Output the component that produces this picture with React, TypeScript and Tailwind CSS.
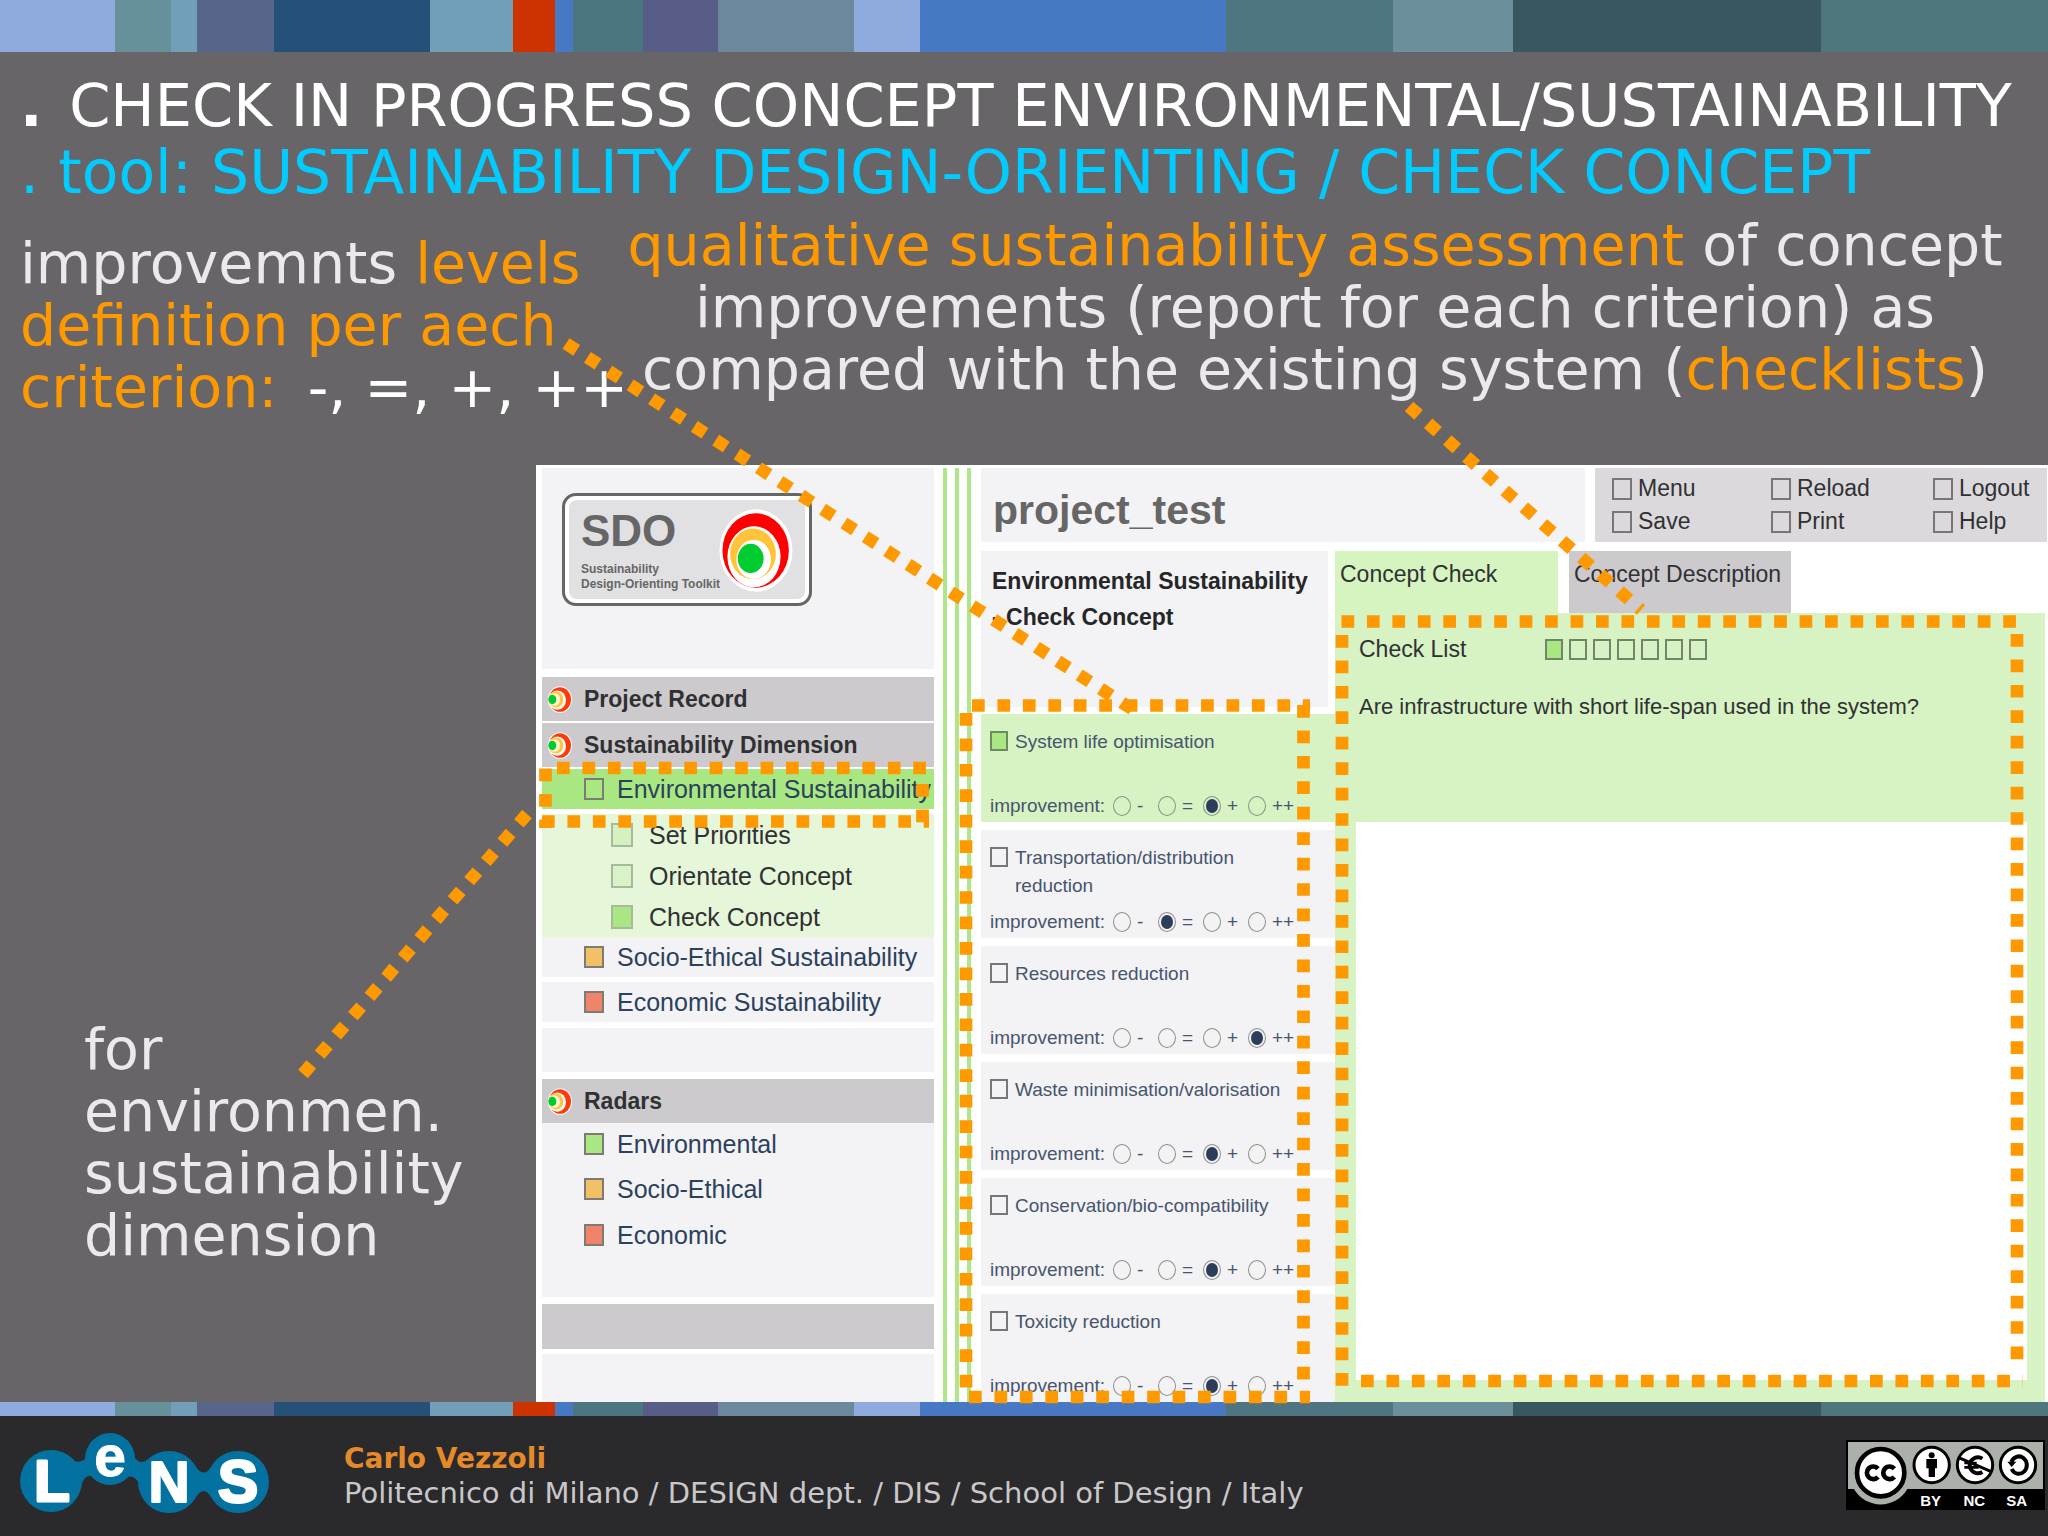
import React from "react";

const stripes: [number, string][] = [
  [115, "#8faadc"],
  [56, "#67919a"],
  [26, "#729fb8"],
  [77, "#58658a"],
  [156, "#255078"],
  [83, "#729fb8"],
  [42, "#cc3300"],
  [18, "#4678c3"],
  [70, "#4b767f"],
  [75, "#575d86"],
  [136, "#6b889c"],
  [66, "#8faadc"],
  [306, "#4678c3"],
  [167, "#4f7680"],
  [120, "#6b909b"],
  [308, "#395761"],
  [227, "#4f767d"],
];

function Stripes({ className }: { className: string }) {
  return (
    <div className={"flex w-full " + className} aria-hidden="true">
      {stripes.map(([w, c], i) => (
        <div key={i} style={{ flex: `${w} 1 0`, backgroundColor: c }} />
      ))}
    </div>
  );
}

function SdoMark() {
  return (
    <svg viewBox="0 0 222 250" className="h-[83px] w-[74px] shrink-0" aria-hidden="true">
      <ellipse cx="111" cy="125" rx="110" ry="124" fill="#fff" />
      <ellipse cx="110" cy="125" rx="100" ry="112" fill="#f00" />
      <ellipse cx="105" cy="144" rx="80" ry="92" fill="#fff" />
      <ellipse cx="102" cy="135" rx="69" ry="76" fill="#ffc43a" />
      <ellipse cx="104" cy="152" rx="52" ry="59" fill="#fff" />
      <ellipse cx="95" cy="149" rx="39" ry="44" fill="#00cc2f" />
    </svg>
  );
}

function Bullet() {
  return (
    <svg viewBox="0 0 72 80" className="h-[27px] w-6 shrink-0" aria-hidden="true">
      <ellipse cx="36" cy="40" rx="36" ry="40" fill="#fff" />
      <ellipse cx="36" cy="40" rx="33" ry="37" fill="#ff3a0a" />
      <ellipse cx="28" cy="42" rx="26" ry="29" fill="#fff" />
      <ellipse cx="24" cy="40" rx="22" ry="24" fill="#ffc43a" />
      <ellipse cx="19" cy="40" rx="18" ry="19" fill="#fff3cf" />
      <ellipse cx="13" cy="40" rx="12" ry="14" fill="#00cc2f" />
    </svg>
  );
}

function SectionBar({ children, className }: { children: React.ReactNode; className: string }) {
  return (
    <h2 className={"flex h-11 items-center bg-[#cccacc] pl-[6px] text-[23px] font-bold text-[#303133] " + className}>
      <Bullet />
      <span className="ml-3">{children}</span>
    </h2>
  );
}

function NavItem({ label, square, className }: { label: string; square: string; className: string }) {
  return (
    <a href="#" className={"flex items-center pl-[42px] text-[25px] leading-7 text-[#2b415c] " + className}>
      <span className={"mr-[13px] h-[22px] w-5 shrink-0 border-2 border-[#7c7c72] " + square} />
      <span className="whitespace-nowrap">{label}</span>
    </a>
  );
}

function SubItem({ label, square }: { label: string; square: string }) {
  return (
    <a href="#" className="flex h-[41px] items-center pl-[69px] text-[25px] leading-7 text-[#303133]">
      <span className={"mr-4 h-6 w-[22px] shrink-0 border-2 border-[#a9b99f] " + square} />
      {label}
    </a>
  );
}

function Sidebar() {
  return (
    <nav className="flex w-[392px] shrink-0 flex-col">
      <div className="h-[201px] bg-[#f3f2f4] pl-5 pt-[25px]">
        <div className="flex h-[113px] w-[250px] rounded-[14px] border-[3px] border-[#666] bg-white p-1">
          <div className="flex flex-1 justify-between rounded-[8px] bg-[#e1e0e2] pl-3 pr-3">
            <div className="w-[130px] whitespace-nowrap text-[#666]">
              <div className="pt-2 text-[44px] font-bold leading-[46px]">SDO</div>
              <div className="pt-2 text-[12px] font-bold leading-[15px]">
                Sustainability
                <br />
                Design-Orienting Toolkit
              </div>
            </div>
            <div className="pt-[9px]">
              <SdoMark />
            </div>
          </div>
        </div>
      </div>
      <SectionBar className="mt-2">Project Record</SectionBar>
      <SectionBar className="mt-[2px]">Sustainability Dimension</SectionBar>
      <NavItem label="Environmental Sustainability" square="bg-[#a9e783]" className="mt-[2px] h-10 bg-[#a9e783]" />
      <div className="mt-[5px] bg-[#e6f6d9]">
        <SubItem label="Set Priorities" square="bg-[#d5f1c0]" />
        <SubItem label="Orientate Concept" square="bg-[#d9f2c7]" />
        <SubItem label="Check Concept" square="bg-[#a9e783]" />
      </div>
      <NavItem label="Socio-Ethical Sustainability" square="bg-[#f2c066]" className="h-10 bg-[#f3f2f4]" />
      <NavItem label="Economic Sustainability" square="bg-[#ef846b]" className="mt-[5px] h-10 bg-[#f3f2f4]" />
      <div className="mt-[6px] h-[44px] bg-[#f3f2f4]" />
      <SectionBar className="mt-[7px]">Radars</SectionBar>
      <div className="h-[174px] bg-[#f3f2f4]">
        <NavItem label="Environmental" square="bg-[#a9e783]" className="h-[42px]" />
        <NavItem label="Socio-Ethical" square="bg-[#f2c066]" className="h-12" />
        <NavItem label="Economic" square="bg-[#ef846b]" className="h-[43px]" />
      </div>
      <div className="mt-[7px] h-[45px] bg-[#cccacc]" />
      <div className="mt-[5px] min-h-[40px] flex-1 bg-[#f3f2f4]" />
    </nav>
  );
}

const criteria: { name: string; level: number; active?: boolean }[] = [
  { name: "System life optimisation", level: 2, active: true },
  { name: "Transportation/distribution reduction", level: 1 },
  { name: "Resources reduction", level: 3 },
  { name: "Waste minimisation/valorisation", level: 2 },
  { name: "Conservation/bio-compatibility", level: 2 },
  { name: "Toxicity reduction", level: 2 },
];
const levels = ["-", "=", "+", "++"];

function Criterion({ name, level, active, index }: { name: string; level: number; active?: boolean; index: number }) {
  return (
    <div
      role="group"
      aria-label={name}
      className={
        "flex h-[108px] shrink-0 flex-col justify-between pb-[2px] pl-[9px] pt-[14px] text-[19px] leading-7 text-[#47556e] " +
        (active ? "bg-[#d7f2c3]" : "bg-[#f3f2f4]")
      }
    >
      <label className="flex items-start">
        <input
          type="checkbox"
          defaultChecked={active}
          className="mr-[7px] mt-[3px] h-5 w-[18px] shrink-0 appearance-none border-2 border-[#777] checked:border-[#6f8a60] checked:bg-[#a9e783]"
        />
        <span className="w-[290px]">{name}</span>
      </label>
      <div className="flex items-center">
        <span className="w-[123px]">improvement:</span>
        {levels.map((l, i) => (
          <label key={l} className="flex w-[45px] items-center">
            <input
              type="radio"
              name={"level-" + index}
              defaultChecked={i === level}
              className="mr-[6px] h-5 w-[18px] shrink-0 appearance-none rounded-[50%] border border-[#8d9189] bg-clip-content p-[2px] checked:bg-[#2c3d5c]"
            />
            {l}
          </label>
        ))}
      </div>
    </div>
  );
}

const menu = ["Menu", "Reload", "Logout", "Save", "Print", "Help"];

function Workspace() {
  return (
    <div className="ml-[10px] flex min-w-0 flex-1 flex-col">
      <div className="flex h-[74px] gap-[10px]">
        <h1 className="flex-1 bg-[#f3f2f4] pl-3 pt-4 text-[41px] font-bold leading-[52px] text-[#666]">project_test</h1>
        <div className="mr-[1px] grid w-[452px] grid-cols-[159px_162px_1fr] content-center bg-[#dbd9db] pl-[17px]">
          {menu.map((m) => (
            <button key={m} type="button" className="flex h-[33px] items-center text-left text-[23px] text-[#303133]">
              <span className="mr-[6px] h-[22px] w-5 border-2 border-[#77777a]" />
              {m}
            </button>
          ))}
        </div>
      </div>
      <div className="mt-[9px] flex flex-1">
        <div className="flex w-[354px] shrink-0 flex-col">
          <h2 className="mr-[7px] h-[156px] bg-[#f3f2f4] pl-[11px] pt-3 text-[23px] font-bold leading-9 text-[#252628]">
            Environmental Sustainability
            <br />- Check Concept
          </h2>
          <div className="mt-[7px] flex flex-col gap-2">
            {criteria.map((c, i) => (
              <Criterion key={c.name} {...c} index={i} />
            ))}
          </div>
        </div>
        <div className="flex flex-1 flex-col text-[23px] text-[#303133]">
          <div className="flex h-[62px] gap-[11px]">
            <button type="button" className="w-[223px] bg-[#d5f4bf] pb-4 pl-[5px] text-left">
              Concept Check
            </button>
            <button type="button" className="w-[222px] bg-[#cccacc] pb-4 pl-[5px] text-left">
              Concept Description
            </button>
          </div>
          <div className="mr-[3px] flex flex-1 flex-col bg-[#d7f2c3] pb-[22px] pl-[21px] pr-[18px]">
            <div className="mt-5 flex h-8 items-center pl-[3px]">
              <span className="w-[186px]">Check List</span>
              <span className="flex gap-[6px]">
                {[1, 2, 3, 4, 5, 6, 7].map((n) => (
                  <button
                    key={n}
                    type="button"
                    aria-label={"Check " + n}
                    className={"h-[21px] w-[18px] border-2 border-[#73846a] " + (n === 1 ? "bg-[#a9e783]" : "")}
                  />
                ))}
              </span>
            </div>
            <label htmlFor="answer" className="mt-[26px] h-[131px] pl-[3px] text-[22px] leading-8">
              Are infrastructure with short life-span used in the system?
            </label>
            <textarea id="answer" className="block w-full flex-1 resize-none bg-white" />
          </div>
        </div>
      </div>
    </div>
  );
}

function LensLogo() {
  return (
    <svg viewBox="18 1430 254 86" className="h-[86px] w-[254px]" aria-label="LeNS">
      <g fill="#0472a1">
        <ellipse cx="51" cy="1481" rx="31" ry="31" />
        <ellipse cx="110" cy="1459" rx="25" ry="26" />
        <ellipse cx="169" cy="1482" rx="31" ry="31" />
        <ellipse cx="238" cy="1482" rx="31" ry="31" />
        <path d="M74 1461 Q83 1464 88 1455 L92 1476 Q84 1474 81 1487 Z" />
        <path d="M133 1455 Q139 1466 147 1460 L140 1486 Q136 1474 126 1477 Z" />
        <path d="M196 1467 Q204 1478 211 1467 L211 1497 Q204 1485 196 1497 Z" />
      </g>
      <g fill="#fff" fontFamily="Liberation Sans, sans-serif" fontWeight="700" textAnchor="middle" stroke="#fff" strokeLinejoin="round">
        <text x="52" y="1501" fontSize="58" strokeWidth="3">L</text>
        <text x="110" y="1476" fontSize="57" strokeWidth="1">e</text>
        <text x="169" y="1502" fontSize="57" strokeWidth="2">N</text>
        <text x="238" y="1502" fontSize="60" strokeWidth="3">S</text>
      </g>
    </svg>
  );
}

function LicenceBadge() {
  return (
    <svg viewBox="0 0 597 210" className="h-[70px] w-[199px]" aria-label="Creative Commons BY NC SA">
      <rect width="597" height="210" fill="#000" />
      <rect x="6" y="6" width="585" height="141" fill="#abb1aa" />
      <path d="M24 147 A92 92 0 0 0 184 147 Z" fill="#abb1aa" />
      <circle cx="104" cy="98" r="71" fill="#fff" stroke="#000" strokeWidth="14" />
      <g fill="none" stroke="#000" strokeWidth="14">
        <path d="M96 86 A19 19 0 1 0 96 111" />
        <path d="M145 86 A19 19 0 1 0 145 111" />
      </g>
      <g fill="#fff" stroke="#000" strokeWidth="9">
        <circle cx="257" cy="75" r="53" />
        <circle cx="387" cy="75" r="53" />
        <circle cx="516" cy="75" r="53" />
      </g>
      <circle cx="257" cy="46" r="9" />
      <path d="M241 57 H273 V85 H267 V111 H248 V85 H241 Z" />
      <g fill="none" stroke="#000">
        <path d="M409 56 A25 25 0 0 0 371 75 A25 25 0 0 0 409 96" strokeWidth="12" />
        <path d="M355 69 H392 M355 82 H398" strokeWidth="8" />
        <path d="M338 53 L436 95" strokeWidth="9" />
        <path d="M496 66 A24 26 0 1 1 497 87" strokeWidth="12" />
      </g>
      <path d="M484 65 H511 L497 81 Z" />
      <g fill="#fff" fontFamily="Liberation Sans, sans-serif" fontWeight="700" fontSize="45" textAnchor="middle">
        <text x="254" y="197">BY</text>
        <text x="385" y="197">NC</text>
        <text x="512" y="197">SA</text>
      </g>
    </svg>
  );
}

/* Dotted callouts that tie the notes to regions of the tool */
function Callouts() {
  return (
    <svg
      viewBox="0 0 2048 1536"
      preserveAspectRatio="none"
      className="pointer-events-none absolute inset-0 h-full w-full"
      fill="none"
      stroke="#ff9900"
      strokeWidth="12.7"
      strokeDasharray="12.7 12.75"
      aria-hidden="true"
    >
      <path d="M566 343.5 L1132 709" />
      <path d="M1409 406.5 L1641 610" />
      <path d="M303 1074 L527 814" />
      <path d="M557 768 H929" />
      <path d="M545.5 768.5 V828" />
      <path d="M922.5 784 V828" />
      <path d="M542 821.5 H929" />
      <path d="M972 705.5 H1310" />
      <path d="M966 713 V1392" />
      <path d="M1303.5 705 V1392" />
      <path d="M969 1397 H1310" />
      <path d="M1341.5 621.5 H2017" />
      <path d="M1342 635 V1388" />
      <path d="M2017 634 V1372" />
      <path d="M1361 1381 H2023" />
    </svg>
  );
}

export default function App() {
  return (
    <div className="relative flex min-h-screen w-full flex-col bg-[#676567] font-['DejaVu_Sans',sans-serif]">
      <Stripes className="h-[52px]" />
      <header className="whitespace-nowrap pl-5 pt-5 leading-[67px]">
        <p className="text-[59px] text-white">
          <b className="mr-2">.</b> CHECK IN PROGRESS CONCEPT ENVIRONMENTAL/SUSTAINABILITY
        </p>
        <p className="text-[60px] text-[#00ccff]">. tool: SUSTAINABILITY DESIGN-ORIENTING / CHECK CONCEPT</p>
      </header>
      <div className="flex h-[259px] whitespace-nowrap pl-5 pt-2 text-[57px] leading-[62px] text-[#ebe9eb]">
        <p className="w-[562px] pt-[18px]">
          improvemnts <span className="text-[#ff9900]">levels</span>
          <br />
          <span className="text-[#ff9900]">definition per aech</span>
          <br />
          <span className="mr-3 text-[#ff9900]">criterion:</span> <span className="text-white">-, =, +, ++</span>
        </p>
        <p className="flex-1 text-center">
          <span className="text-[#ff9900]">qualitative sustainability assessment</span> of concept
          <br />
          improvements (report for each criterion) as
          <br />
          compared with the existing system (<span className="text-[#ff9900]">checklists</span>)
        </p>
      </div>
      <main className="flex flex-1">
        <p className="w-[536px] shrink-0 self-end pb-[136px] pl-[84px] text-[57px] leading-[62px] text-[#ebe9eb]">
          for
          <br />
          environmen.
          <br />
          sustainability
          <br />
          dimension
        </p>
        <div className="flex min-w-0 flex-1 bg-white pl-[6px] pt-[3px] font-['Liberation_Sans',Arial,sans-serif]">
          <Sidebar />
          <div className="ml-[9px] flex gap-2" aria-hidden="true">
            <div className="w-1 bg-[#aee68a]" />
            <div className="w-1 bg-[#aee68a]" />
            <div className="w-1 bg-[#aee68a]" />
          </div>
          <Workspace />
        </div>
      </main>
      <Stripes className="h-[14px]" />
      <footer className="flex h-[120px] items-start bg-[#2a292b] pl-[18px] pr-[3px]">
        <div className="w-[326px] shrink-0 pt-[14px]">
          <LensLogo />
        </div>
        <div className="flex-1 whitespace-nowrap pt-[25px] leading-[35px] text-[#c9c7c9]">
          <p className="text-[28px] font-bold text-[#e58a2b]">Carlo Vezzoli</p>
          <p className="text-[29px]">Politecnico di Milano / DESIGN dept. / DIS / School of Design / Italy</p>
        </div>
        <div className="pt-6">
          <LicenceBadge />
        </div>
      </footer>
      <Callouts />
    </div>
  );
}
